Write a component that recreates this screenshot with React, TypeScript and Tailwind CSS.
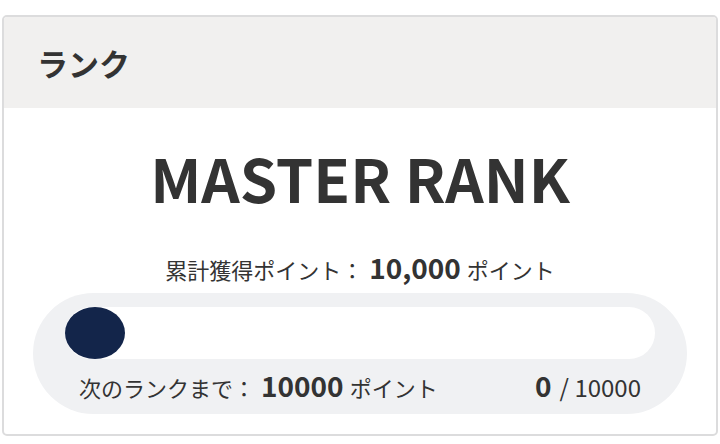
export default function App() {
  return (
    <div
      className="w-[720px] h-[444px] bg-white pt-[15px] px-[2px]"
      style={{ fontFamily: '"Noto Sans CJK JP", "Noto Sans", sans-serif' }}
    >
      <div className="h-[421px] rounded-[5px] border-2 border-[#dcdcdd] overflow-hidden text-[#333333]">
        <div className="h-[91px] bg-[#f1f0ef] flex items-center pl-[33px]">
          <h2 className="text-[31px] font-bold leading-none">ランク</h2>
        </div>

        <div className="flex flex-col items-center pt-[39px]">
          <div className="text-[60px] font-bold leading-none">MASTER RANK</div>

          <div className="mt-[46px] flex items-baseline text-[22px] leading-none">
            <span>累計獲得ポイント：</span>
            <span className="text-[28px] font-bold mx-[6px]">10,000</span>
            <span>ポイント</span>
          </div>

          <div className="mt-[12px] w-[654px] h-[121px] rounded-full bg-[#f0f1f3] px-[32px] pt-[14px]">
            <div className="h-[52px] rounded-full bg-white">
              <div className="w-[60px] h-[52px] rounded-[50%] bg-[#13254a]" />
            </div>
            <div className="mt-[12px] flex items-baseline justify-between pl-[14px] pr-[14px] text-[22px] leading-none">
              <div className="flex items-baseline">
                <span>次のランクまで：</span>
                <span className="text-[28px] font-bold mx-[6px]">10000</span>
                <span>ポイント</span>
              </div>
              <div className="flex items-baseline">
                <span className="text-[28px] font-bold">0</span>
                <span className="text-[24px] ml-[8px]">/ 10000</span>
              </div>
            </div>
          </div>
        </div>
      </div>
    </div>
  );
}
